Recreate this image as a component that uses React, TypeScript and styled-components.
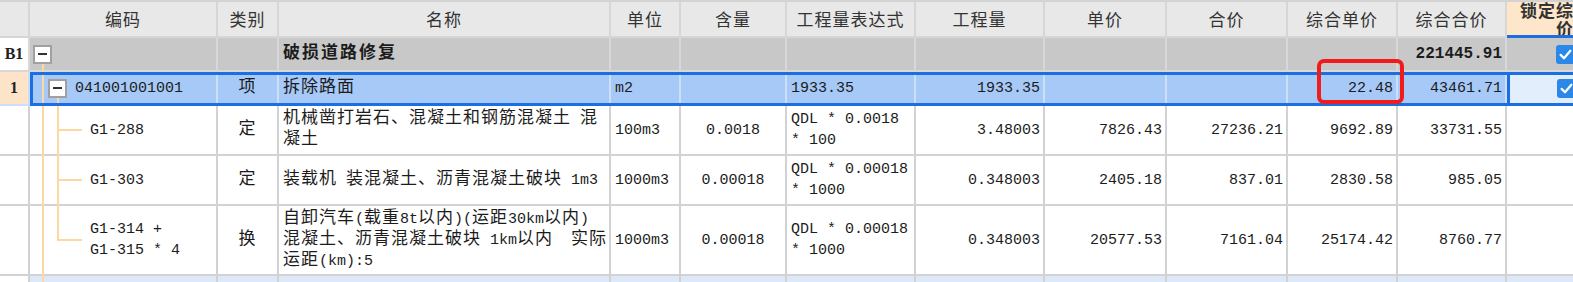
import React from 'react';
import styled, { createGlobalStyle, css } from 'styled-components';

const COLS = '30px 188px 61px 332px 70px 106px 129px 129px 122px 121px 110px 109px 118px';
const BLUE = '#1b6fe3';
const BRANCH = '#fcd8a4';

type Align = 'left' | 'center' | 'right';

const GlobalStyle = createGlobalStyle`
  html, body {
    margin: 0;
    padding: 0;
    background: #fff;
    overflow: hidden;
  }
  body {
    font-family: "Liberation Mono", "Noto Sans CJK SC", monospace;
    color: #1c1c1c;
  }
  * { box-sizing: border-box; }
`;

const Sheet = styled.div`
  position: relative;
  width: 1625px;
  border-top: 2px solid #d3d3d3;
`;

const Row = styled.div<{ $h: number; $bg: string; $line: string; $selected?: boolean }>`
  position: relative;
  display: grid;
  grid-template-columns: ${COLS};
  grid-template-rows: ${p => p.$h}px;
  height: ${p => p.$h}px;
  background: ${p => p.$bg};
  --line: ${p => p.$line};
  ${p =>
    p.$selected &&
    css`
      &::after {
        content: '';
        position: absolute;
        left: 30px;
        right: -20px;
        top: 0;
        bottom: 0;
        border: 3px solid ${BLUE};
        pointer-events: none;
      }
    `}
`;

const HeadCell = styled.div<{ $lock?: boolean }>`
  display: flex;
  align-items: center;
  justify-content: center;
  overflow: hidden;
  background: ${p => (p.$lock ? '#fde6c9' : '#e8e8e8')};
  border-right: 2px solid #d6d6d6;
  border-bottom: ${p => (p.$lock ? `3px solid ${BLUE}` : '2px solid #d6d6d6')};
  font-family: "Noto Sans CJK SC", sans-serif;
  font-size: 17px;
  font-weight: ${p => (p.$lock ? 700 : 400)};
  letter-spacing: 1px;
  line-height: 18px;
  color: #333;
  text-align: center;
  white-space: pre;
`;

const Cell = styled.div<{ $bg?: string; $right?: boolean; $indent?: number; $lock?: boolean }>`
  position: relative;
  display: flex;
  align-items: center;
  min-width: 0;
  padding: 0 ${p => (p.$right ? 3 : 4)}px 0 ${p => p.$indent ?? 4}px;
  background: ${p => p.$bg ?? 'transparent'};
  border-right: 2px solid var(--line);
  border-bottom: 2px solid var(--line);
  ${p =>
    p.$lock &&
    css`
      justify-content: center;
      padding: 0;
    `}
`;

const Text = styled.div<{ $align: Align }>`
  flex: 1;
  min-width: 0;
  white-space: pre;
  font-family: "Liberation Mono", monospace;
  font-size: 15px;
  line-height: 21px;
  text-align: ${p => p.$align};
`;

const Han = styled.span<{ $bold?: boolean }>`
  font-family: "Noto Sans CJK SC", sans-serif;
  font-size: 17px;
  line-height: 14px;
  font-weight: ${p => (p.$bold ? 700 : 400)};
  letter-spacing: ${p => (p.$bold ? 2 : 1)}px;
`;

const Latin = styled.span<{ $bold?: boolean }>`
  font-family: "Liberation Mono", monospace;
  font-size: ${p => (p.$bold ? 16 : 15)}px;
  line-height: 14px;
  font-weight: ${p => (p.$bold ? 700 : 400)};
`;

const RowNo = styled.span`
  flex: 1;
  text-align: center;
  font-family: "Liberation Serif", serif;
  font-size: 16px;
  font-weight: 700;
  color: #222;
`;

const VLine = styled.span<{ $x: number; $top?: string; $bottom?: string }>`
  position: absolute;
  left: ${p => p.$x}px;
  top: ${p => p.$top ?? '0'};
  bottom: ${p => p.$bottom ?? '-2px'};
  width: 2px;
  background: ${BRANCH};
`;

const HLine = styled.span<{ $x: number; $w: number }>`
  position: absolute;
  left: ${p => p.$x}px;
  top: calc(50% - 1px);
  width: ${p => p.$w}px;
  height: 2px;
  background: ${BRANCH};
`;

const Toggle = styled.span`
  position: relative;
  z-index: 1;
  flex: none;
  display: flex;
  align-items: center;
  justify-content: center;
  width: 19px;
  height: 19px;
  margin-right: 8px;
  background: #fff;
  border: 2px solid #a0a0a0;
  &::before {
    content: '';
    width: 9px;
    height: 2px;
    background: #333;
  }
`;

const CheckBox = styled.span`
  display: flex;
  align-items: center;
  justify-content: center;
  width: 19px;
  height: 19px;
  border-radius: 3px;
  background: #2b87e8;
`;

const Highlight = styled.div`
  position: absolute;
  left: 1317px;
  top: 57px;
  width: 87px;
  height: 45px;
  border: 4px solid #f01c1c;
  border-radius: 7px;
  pointer-events: none;
`;

const HAN = /([\u3000-\u303f\u3400-\u9fff\uff00-\uffef]+)/;
const isHan = (s: string) => /[\u3000-\u303f\u3400-\u9fff\uff00-\uffef]/.test(s);

function Mixed({ text, bold }: { text: string; bold?: boolean }) {
  return (
    <>
      {text
        .split(HAN)
        .filter(Boolean)
        .map((part, i) =>
          isHan(part) ? (
            <Han key={i} $bold={bold}>{part}</Han>
          ) : (
            <Latin key={i} $bold={bold}>{part}</Latin>
          )
        )}
    </>
  );
}

function Check() {
  return (
    <CheckBox>
      <svg width="15" height="15" viewBox="0 0 20 20">
        <path d="M3.5 10.5 L8 15 L16.5 5" stroke="#fff" strokeWidth="3" fill="none" strokeLinecap="round" strokeLinejoin="round" />
      </svg>
    </CheckBox>
  );
}

const HEADERS = ['', '编码', '类别', '名称', '单位', '含量', '工程量表达式', '工程量', '单价', '合价', '综合单价', '综合合价', '锁定综合单\n价'];
const ALIGN: Align[] = ['center', 'left', 'left', 'center', 'left', 'right', 'right', 'right', 'right', 'right'];

interface Item {
  code: string;
  values: string[];
  height: number;
}

const ITEMS: Item[] = [
  {
    code: 'G1-288',
    values: ['定', '机械凿打岩石、混凝土和钢筋混凝土 混\n凝土', '100m3', '0.0018', 'QDL * 0.0018\n* 100', '3.48003', '7826.43', '27236.21', '9692.89', '33731.55'],
    height: 50,
  },
  {
    code: 'G1-303',
    values: ['定', '装载机 装混凝土、沥青混凝土破块 1m3', '1000m3', '0.00018', 'QDL * 0.00018\n* 1000', '0.348003', '2405.18', '837.01', '2830.58', '985.05'],
    height: 50,
  },
  {
    code: 'G1-314 +\nG1-315 * 4',
    values: ['换', '自卸汽车(载重8t以内)(运距30km以内)\n混凝土、沥青混凝土破块 1km以内　实际\n运距(km):5', '1000m3', '0.00018', 'QDL * 0.00018\n* 1000', '0.348003', '20577.53', '7161.04', '25174.42', '8760.77'],
    height: 70,
  },
];

function Values({ values, bold }: { values: string[]; bold?: boolean }) {
  return (
    <>
      {values.map((v, i) => (
        <Cell key={i} $right={ALIGN[i] === 'right'}>
          <Text $align={ALIGN[i]}>
            <Mixed text={v} bold={bold} />
          </Text>
        </Cell>
      ))}
    </>
  );
}

export default function App() {
  return (
    <>
      <GlobalStyle />
      <Sheet>
        <Row $h={36} $bg="#e8e8e8" $line="#d6d6d6">
          {HEADERS.map((h, i) => (
            <HeadCell key={i} $lock={i === HEADERS.length - 1}>
              {h}
            </HeadCell>
          ))}
        </Row>

        <Row $h={34} $bg="#c8c8c8" $line="#d8d8d8">
          <Cell $bg="#fff">
            <RowNo>B1</RowNo>
          </Cell>
          <Cell $indent={3}>
            <VLine $x={12} $top="calc(50% + 9px)" />
            <Toggle />
          </Cell>
          <Values values={['', '破损道路修复', '', '', '', '', '', '', '', '221445.91']} bold />
          <Cell $lock>
            <Check />
          </Cell>
        </Row>

        <Row $h={34} $bg="#a6c9f7" $line="#cddff8" $selected>
          <Cell $bg="#fde4c8">
            <RowNo>1</RowNo>
          </Cell>
          <Cell $indent={18}>
            <VLine $x={12} />
            <VLine $x={27} $top="calc(50% + 9px)" />
            <Toggle />
            <Text $align="left">
              <Mixed text="041001001001" />
            </Text>
          </Cell>
          <Values values={['项', '拆除路面', 'm2', '', '1933.35', '1933.35', '', '', '22.48', '43461.71']} />
          <Cell $lock $bg="#e3eefc" style={{ borderLeft: `3px solid ${BLUE}` }}>
            <Check />
          </Cell>
        </Row>

        {ITEMS.map((item, idx) => (
          <Row key={item.code} $h={item.height} $bg="#fff" $line="#d2d2d2">
            <Cell />
            <Cell $indent={60}>
              <VLine $x={12} />
              <VLine $x={27} $bottom={idx === ITEMS.length - 1 ? 'calc(50% - 1px)' : '-2px'} />
              <HLine $x={27} $w={25} />
              <Text $align="left">
                <Mixed text={item.code} />
              </Text>
            </Cell>
            <Values values={item.values} />
            <Cell />
          </Row>
        ))}

        <Row $h={30} $bg="#dde8f9" $line="#d2d2d2">
          <Cell $bg="#fff" />
          <Cell>
            <VLine $x={12} />
          </Cell>
          <Values values={['', '', '', '', '', '', '', '', '', '']} />
          <Cell />
        </Row>

        <Highlight />
      </Sheet>
    </>
  );
}
